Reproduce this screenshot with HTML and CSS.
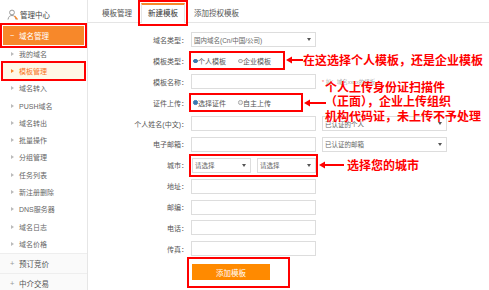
FILE: index.html
```html
<!DOCTYPE html>
<html lang="zh-CN">
<head>
    <meta charset="UTF-8">
    <title>新建模板</title>
    <link rel="stylesheet" href="styles.css">
</head>
<body>
<div class="page">
    <div class="sidebar">
        <div class="side-top">
            <svg class="user-icon" width="11" height="11" viewBox="0 0 11 11">
                <circle cx="5" cy="3.5" r="2.4" fill="none" stroke="#999" stroke-width="1"/>
                <path d="M1 10.5 C1.5 7.5 3 6.5 5 6.5 C7 6.5 8.5 7.5 9 10.5" fill="none" stroke="#999" stroke-width="1"/>
                <path d="M7.5 7 L10.5 10.5" stroke="#f7882a" stroke-width="1.2"/>
            </svg>
            管理中心
        </div>
        <div class="group-title"><span class="sign">&minus;</span>域名管理</div>
        <ul class="side-list">
            <li>我的域名</li>
            <li class="active">模板管理</li>
            <li>域名转入</li>
            <li>PUSH域名</li>
            <li>域名转出</li>
            <li>批量操作</li>
            <li>分组管理</li>
            <li>任务列表</li>
            <li>新注册删除</li>
            <li>DNS服务器</li>
            <li>域名日志</li>
            <li>域名价格</li>
        </ul>
        <div class="side-fold"><span class="sign">+</span>预订竞价</div>
        <div class="side-fold"><span class="sign">+</span>中介交易</div>
    </div>

    <div class="main">
        <div class="tabs">
            <span class="tab">模板管理</span>
            <span class="tab current">新建模板</span>
            <span class="tab">添加授权模板</span>
        </div>

        <div class="form">
            <div class="row">
                <label>域名类型：</label>
                <div class="select">国内域名(Cn/中国/公司)<span class="caret"></span></div>
            </div>
            <div class="row">
                <label>模板类型：</label>
                <div class="choice">
                    <span class="radio"><span class="dot checked"></span>个人模板</span>
                    <span class="radio"><span class="dot"></span>企业模板</span>
                </div>
            </div>
            <div class="row">
                <label>模板名称：</label>
                <div class="field"></div>
                <span class="hint"><em>*</em> 如：域名xxxx的模板</span>
            </div>
            <div class="row">
                <label>证件上传：</label>
                <div class="choice upload">
                    <span class="radio"><span class="dot checked"></span>选择证件</span>
                    <span class="radio"><span class="dot"></span>自主上传</span>
                </div>
            </div>
            <div class="row">
                <label>个人姓名(中文)：</label>
                <div class="field"></div>
                <div class="select side">已认证的个人<span class="caret"></span></div>
            </div>
            <div class="row">
                <label>电子邮箱：</label>
                <div class="field"></div>
                <div class="select side">已认证的邮箱<span class="caret"></span></div>
            </div>
            <div class="row">
                <label>城市：</label>
                <div class="choice city">
                    <div class="select half">请选择<span class="caret"></span></div>
                    <div class="select half">请选择<span class="caret"></span></div>
                </div>
            </div>
            <div class="row">
                <label>地址：</label>
                <div class="field"></div>
            </div>
            <div class="row">
                <label>邮编：</label>
                <div class="field"></div>
            </div>
            <div class="row">
                <label>电话：</label>
                <div class="field"></div>
            </div>
            <div class="row">
                <label>传真：</label>
                <div class="field"></div>
            </div>
            <div class="submit">
                <button>添加模板</button>
            </div>
        </div>
    </div>

    <!-- annotations -->
    <svg class="arrow a1" width="17" height="8" viewBox="0 0 17 8">
        <polygon points="0,4 6,0.5 6,7.5" fill="#f00"/>
        <line x1="5" y1="4" x2="17" y2="4" stroke="#f00" stroke-width="2"/>
    </svg>
    <div class="note n1">在这选择个人模板，还是企业模板</div>

    <svg class="arrow a2" width="22" height="8" viewBox="0 0 22 8">
        <polygon points="0,4 6,0.5 6,7.5" fill="#f00"/>
        <line x1="5" y1="4" x2="22" y2="4" stroke="#f00" stroke-width="2"/>
    </svg>
    <div class="note n2">个人上传身份证扫描件<br>（正面），企业上传组织<br>机构代码证，未上传不予处理</div>

    <svg class="arrow a3" width="25" height="8" viewBox="0 0 25 8">
        <polygon points="0,4 6,0.5 6,7.5" fill="#f00"/>
        <line x1="5" y1="4" x2="25" y2="4" stroke="#f00" stroke-width="2"/>
    </svg>
    <div class="note n3">选择您的城市</div>
</div>
</body>
</html>
```

FILE: styles.css
```css
* {
    box-sizing: border-box;
}
body {
    margin: 0;
    background: #fff;
    font-family: "Liberation Sans", "Noto Sans CJK SC", sans-serif;
    font-size: 7px;
    color: #555;
}
.page {
    position: relative;
    display: flex;
    width: 489px;
    height: 290px;
    overflow: hidden;
}

/* sidebar */
.sidebar {
    width: 88px;
    flex: none;
    border-right: 1px solid #e6e6e6;
}
.side-top {
    height: 24px;
    margin-bottom: 2px;
    padding: 4px 0 0 7px;
    display: flex;
    align-items: center;
    gap: 2px;
    font-size: 7.5px;
    color: #444;
}
.group-title {
    margin: 0 3px;
    height: 19px;
    padding-left: 7px;
    display: flex;
    align-items: center;
    background: #f7882a;
    color: #fff;
    font-size: 7.5px;
    outline: 2px solid #f00;
    outline-offset: 1px;
}
.sign {
    width: 9px;
    flex: none;
}
.side-list {
    list-style: none;
    margin: 0;
    padding: 0;
}
.side-list li {
    height: 17.3px;
    padding-left: 11px;
    display: flex;
    align-items: center;
    color: #666;
}
.side-list li::before {
    content: "";
    width: 0;
    height: 0;
    margin-right: 5px;
    border-left: 3px solid #bbb;
    border-top: 2px solid transparent;
    border-bottom: 2px solid transparent;
}
.side-list li.active {
    margin: 0 2px;
    padding-left: 9px;
    background: #fff8e6;
    color: #f7721c;
    outline: 2px solid #f00;
    outline-offset: -1px;
}
.side-list li.active::before {
    border-left-color: #f7882a;
}
.side-fold {
    height: 20px;
    padding-left: 10px;
    display: flex;
    align-items: center;
    border-top: 1px solid #eee;
    background: #fafafa;
    color: #555;
    font-size: 7.5px;
}
.side-fold .sign {
    color: #999;
}

/* main */
.main {
    flex: 1;
}
.tabs {
    height: 23px;
    padding: 3px 0 0 7px;
    display: flex;
    align-items: flex-start;
    gap: 2px;
    border-bottom: 1px solid #e5e5e5;
}
.tab {
    height: 19px;
    padding: 0 6px;
    line-height: 17px;
    border: 1px solid transparent;
    border-top-width: 2px;
    border-bottom: 0;
    font-size: 7.5px;
    color: #555;
}
.tab.current {
    height: 20px;
    background: #fff;
    border-color: #e5e5e5;
    border-top-color: #f7882a;
    color: #333;
    outline: 2px solid #f00;
    outline-offset: 1px;
}

.form {
    padding-top: 6.5px;
}
.row {
    height: 20.9px;
    display: flex;
    align-items: center;
}
.row label {
    width: 100px;
    flex: none;
    text-align: right;
    color: #555;
}
.field,
.select {
    margin-left: 3px;
    width: 125px;
    height: 15px;
    flex: none;
    border: 1px solid #ddd;
    background: #fff;
}
.select {
    padding: 0 4px 0 2px;
    display: flex;
    align-items: center;
    justify-content: space-between;
    color: #666;
    font-size: 6.5px;
}
.select.side {
    margin-left: 6px;
}
.caret {
    width: 0;
    height: 0;
    border-top: 3px solid #555;
    border-left: 2px solid transparent;
    border-right: 2px solid transparent;
}
.hint {
    margin-left: 6px;
    font-size: 5.5px;
    color: #aaa;
}
.hint em {
    font-style: normal;
    color: #f66;
}

.choice {
    margin-left: 3px;
    width: 92px;
    height: 15px;
    padding-left: 2px;
    display: flex;
    align-items: center;
    outline: 2px solid #f00;
}
.choice.upload {
    width: 110px;
}
.choice.city {
    width: 125px;
    height: 19px;
    padding: 2px 0 2px 1px;
    gap: 6px;
}
.select.half {
    margin-left: 0;
    width: 59px;
}
.radio {
    display: inline-flex;
    align-items: center;
    margin-right: 12px;
    color: #555;
}
.dot {
    width: 4.5px;
    height: 4.5px;
    margin-right: 0.5px;
    border: 1px solid #aaa;
    border-radius: 50%;
    background: #eee;
}
.dot.checked {
    border-color: #3a78b0;
    background: #3a78b0;
}

.submit {
    margin-left: 101px;
    width: 99px;
    height: 27px;
    padding: 5px 0 0 3px;
    outline: 2px solid #f00;
}
.submit button {
    width: 78px;
    height: 16px;
    padding: 0;
    border: 0;
    background: #ff8a00;
    color: #fff;
    font-family: inherit;
    font-size: 7.5px;
}

/* annotations */
.arrow {
    position: absolute;
}
.a1 { left: 286px; top: 56px; }
.a2 { left: 304px; top: 99px; }
.a3 { left: 319px; top: 161px; }
.note {
    position: absolute;
    color: #f00;
    font-family: "Noto Sans CJK SC", sans-serif;
    font-weight: bold;
    font-size: 12px;
    line-height: 14.5px;
    white-space: nowrap;
}
.n1 { left: 303px; top: 52.5px; }
.n2 { left: 325px; top: 79.75px; }
.n3 { left: 347px; top: 157.75px; }
```
